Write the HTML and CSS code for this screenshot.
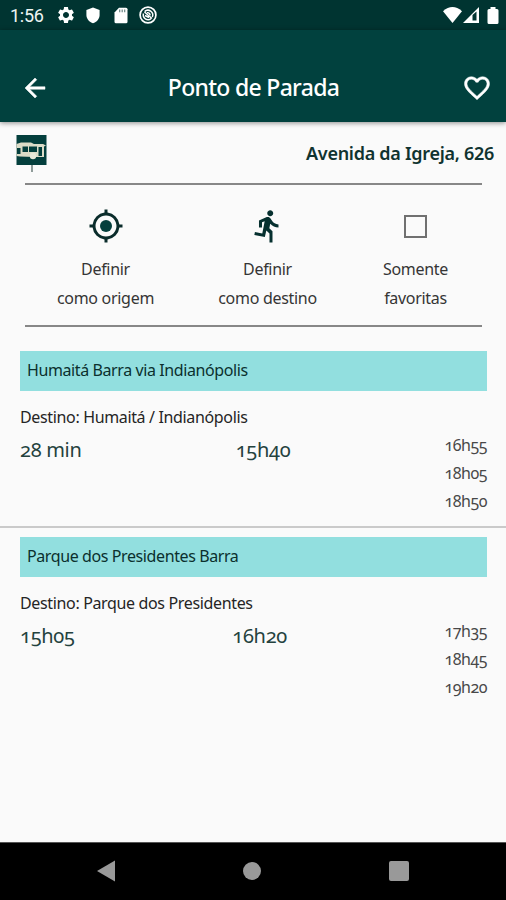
FILE: index.html
```html
<!DOCTYPE html>
<html lang="pt-BR">
<head>
<meta charset="utf-8">
<title>Ponto de Parada</title>
<link rel="stylesheet" href="styles.css">
</head>
<body>
<div class="screen">
  <div class="status">
    <span class="clock">1:56</span>
    <svg class="s-gear" width="20" height="20" viewBox="0 0 24 24"><path fill="#fff" d="M19.14 12.94c.04-.3.06-.61.06-.94 0-.32-.02-.64-.07-.94l2.03-1.58c.18-.14.23-.41.12-.61l-1.92-3.32c-.12-.22-.37-.29-.59-.22l-2.39.96c-.5-.38-1.03-.7-1.62-.94l-.36-2.54c-.04-.24-.24-.41-.48-.41h-3.84c-.24 0-.43.17-.47.41l-.36 2.54c-.59.24-1.13.57-1.62.94l-2.39-.96c-.22-.08-.47 0-.59.22L2.74 8.87c-.12.21-.08.47.12.61l2.03 1.58c-.05.3-.09.63-.09.94s.02.64.07.94l-2.03 1.58c-.18.14-.23.41-.12.61l1.92 3.32c.12.22.37.29.59.22l2.39-.96c.5.38 1.03.7 1.62.94l.36 2.54c.05.24.24.41.48.41h3.84c.24 0 .44-.17.47-.41l.36-2.54c.59-.24 1.13-.56 1.62-.94l2.39.96c.22.08.47 0 .59-.22l1.92-3.32c.12-.22.07-.47-.12-.61zM12 15.600c-1.980 0-3.600-1.620-3.600-3.600s1.620-3.600 3.600-3.600 3.600 1.620 3.600 3.600-1.620 3.600-3.600 3.600z"/></svg>
    <svg class="s-shield" width="14" height="17" viewBox="0 0 14 17"><path fill="#fff" d="M7 .5 13.600 3v5c0 4-3 7-6.600 8.300C3.400 15 .4 12 .4 8V3z"/></svg>
    <svg class="s-card" width="14" height="17" viewBox="0 0 14 17"><path fill="#fff" d="M5 .8h7q1.500 0 1.500 1.500v12.400q0 1.500-1.500 1.500H2q-1.500 0-1.500-1.500V5.500z"/><path stroke="#6b8785" stroke-width="1.200" d="M5.700 2.500v2.800M8.200 2.500v2.800M10.700 2.500v2.800"/></svg>
    <svg class="s-round" width="18" height="18" viewBox="0 0 18 18" fill="none" stroke="#fff"><circle cx="9" cy="9" r="7.900" stroke-width="1.700"/><path stroke-width="1.500" d="M5.600 5.600A4.800 4.800 0 0 1 13.300 11M12 12.700A4.800 4.800 0 0 1 4.500 7.500M5.500 6l7.500 6.500M6 9.500l4 2"/><path stroke-width="1.500" d="M8 6.800a2.300 2.300 0 0 1 3 2.600"/></svg>
    <span class="grow"></span>
    <svg class="s-wifi" width="19" height="16" viewBox="0 0 19 16"><path fill="#fff" d="M0 4.200Q9.500-4 19 4.200L9.500 16z"/></svg>
    <svg class="s-cell" width="16" height="16" viewBox="0 0 16 16"><path fill="#fff" fill-rule="evenodd" d="M0 16 16 0v16zM9.500 8V13.500H13.500V4.500z"/></svg>
    <svg class="s-bat" width="12" height="17" viewBox="0 0 12 17"><path fill="#fff" d="M3.500 0h5v2H10q1.500 0 1.500 1.500v12Q11.500 17 10 17H2Q.5 17 .5 15.500v-12Q.5 2 2 2h1.500z"/></svg>
  </div>
  <header class="bar">
    <svg width="30" height="30" viewBox="0 0 24 24"><path fill="#fff" stroke="#fff" stroke-width=".4" d="M20 11H7.830l5.590-5.590L12 4l-8 8 8 8 1.410-1.410L7.830 13H20z"/></svg>
    <h1>Ponto de Parada</h1>
    <svg width="30" height="30" viewBox="0 0 24 24"><path fill="#fff" stroke="#fff" stroke-width=".4" d="M16.500 3c-1.740 0-3.410.81-4.500 2.090C10.910 3.810 9.240 3 7.500 3 4.420 3 2 5.420 2 8.500c0 3.780 3.400 6.860 8.550 11.540L12 21.350l1.450-1.320C18.600 15.360 22 12.280 22 8.500 22 5.420 19.580 3 16.500 3zm-4.400 15.550-.1.100-.1-.1C7.140 14.240 4 11.390 4 8.500 4 6.500 5.500 5 7.500 5c1.540 0 3.040.99 3.570 2.360h1.870C13.460 5.990 14.960 5 16.500 5c2 0 3.500 1.500 3.500 3.500 0 2.890-3.140 5.740-7.900 10.050z"/></svg>
  </header>
  <main>
    <div class="stop">
      <svg width="32" height="38" viewBox="0 0 32 38"><path fill="#043f3d" d="M.5 0h30v30H.5z"/><path fill="#dcdcc8" d="M.5 9 5 7.500h10l3 1.500h9l3 1.500-2 1V22H18l-14-.5L.5 21z"/><path fill="#043f3d" d="M6.500 11.500H12V17H6.500zM13 11.500h8V17h-8zM22.500 12H26v9h-3.500zM1 13h3.500v6H1z"/><circle cx="17" cy="21" r="3.200" fill="#e8e8d8"/><path stroke="#617370" stroke-width="1.400" d="M16 30v7"/></svg>
      <span class="address">Avenida da Igreja, 626</span>
    </div>
    <div class="actions">
      <div class="action origin">
        <svg width="36" height="36" viewBox="0 0 24 24"><circle cx="12" cy="12" r="4" fill="#043f3d"/><path fill="#0a2c2b" d="M20.940 11A8.990 8.990 0 0 0 13 3.060V1h-2v2.060A8.990 8.990 0 0 0 3.060 11H1v2h2.060A8.990 8.990 0 0 0 11 20.940V23h2v-2.060A8.990 8.990 0 0 0 20.940 13H23v-2zM12 19c-3.870 0-7-3.130-7-7s3.130-7 7-7 7 3.130 7 7-3.130 7-7 7z"/></svg>
        <span>Definir</span><span>como origem</span>
      </div>
      <div class="action dest">
        <svg width="36" height="36" viewBox="0 0 24 24"><path fill="#06302f" d="M13.490 5.480c1.100 0 2-.9 2-2s-.9-2-2-2-2 .9-2 2 .9 2 2 2zm-3.600 13.900 1-4.400 2.100 2v6h2v-7.500l-2.100-2 .6-3c1.300 1.500 3.300 2.500 5.500 2.500v-2c-1.900 0-3.500-1-4.300-2.400l-1-1.600c-.4-.6-1-1-1.700-1-.3 0-.5.1-.8.1l-5.200 2.200v4.700h2v-3.400l1.800-.7-1.600 8.100-4.900-1-.4 2z"/></svg>
        <span>Definir</span><span>como destino</span>
      </div>
      <div class="action fav">
        <i class="box"></i>
        <span>Somente</span><span>favoritas</span>
      </div>
    </div>
    <section class="line first">
      <h2>Humaitá Barra via Indianópolis</h2>
      <p>Destino: Humaitá / Indianópolis</p>
      <div class="times"><b>28 min</b><b>15h40</b><ul><li>16h55</li><li>18h05</li><li>18h50</li></ul></div>
    </section>
    <section class="line">
      <h2>Parque dos Presidentes Barra</h2>
      <p>Destino: Parque dos Presidentes</p>
      <div class="times"><b>15h05</b><b>16h20</b><ul><li>17h35</li><li>18h45</li><li>19h20</li></ul></div>
    </section>
  </main>
  <nav>
    <svg width="18" height="22" viewBox="0 0 18 22"><path fill="#999" d="M18 .5v21L0 11z"/></svg>
    <i class="home"></i>
    <i class="recent"></i>
  </nav>
</div>
</body>
</html>
```
FILE: styles.css
```css
* { box-sizing: border-box; margin: 0; padding: 0; }
body { font-family: "Noto Sans", sans-serif; background: #fafafa; }
svg { display: block; flex: none; }
.screen { width: 506px; height: 900px; display: flex; flex-direction: column; overflow: hidden; }
.status { height: 30px; background: #003431; display: flex; align-items: center; padding: 0 7px 0 10px; flex: none; }
.clock { font: 400 18px/30px Roboto, sans-serif; color: #eef4f3; width: 46px; padding-top: 2px; letter-spacing: -.3px; }
.s-shield { margin-left: 10px; }
.s-card { margin-left: 14px; }
.s-round { margin-left: 11px; }
.grow { flex: 1; }
.s-cell { margin-left: 1px; }
.s-bat { margin-left: 8px; }
.bar { height: 92px; flex: none; background: #01413e; display: flex; justify-content: space-between; padding: 43px 14px 0 20px; box-shadow: 0 1px 5px rgba(0,0,0,.45); position: relative; }
h1 { font-size: 23px; line-height: 30px; font-weight: 500; color: #fff; letter-spacing: -.7px; margin-top: -1px; padding-right: 5px; white-space: nowrap; }
main { flex: 1; background: #fafafa; }
.stop { height: 61px; display: flex; justify-content: space-between; padding: 13px 12px 0 16px; }
.address { font-size: 18px; font-weight: 600; line-height: 36px; letter-spacing: -.28px; color: #103330; white-space: nowrap; }
.actions { margin: 0 24px 0 25px; height: 144px; border-top: 2px solid #878787; border-bottom: 2px solid #878787; display: flex; }
.action { display: flex; flex-direction: column; align-items: center; padding-top: 23px; font-size: 16px; line-height: 28.500px; letter-spacing: -.3px; color: #353535; white-space: nowrap; }
.action svg { margin-bottom: 11px; }
.origin { width: 161px; }
.dest { width: 163px; }
.fav { width: 133px; }
.box { width: 23px; height: 23px; border: 2px solid #707070; margin: 7px 0 17px; }
.line { padding: 9px 19px 0 20px; height: 186px; }
.first { padding-top: 24px; height: 201px; border-bottom: 2px solid #cacaca; }
h2 { height: 40px; background: #92dfdf; font-size: 16px; font-weight: 400; line-height: 38px; padding-left: 7px; letter-spacing: -.4px; color: #0b302e; white-space: nowrap; }
p { font-size: 16px; line-height: 28px; margin-top: 12px; letter-spacing: -.35px; color: #252525; white-space: nowrap; }
.times { display: flex; justify-content: space-between; font-feature-settings: "onum"; }
.times b { font-weight: 400; font-size: 20px; line-height: 38px; letter-spacing: -.3px; color: #24423e; white-space: nowrap; }
ul { list-style: none; text-align: right; font-size: 16px; line-height: 28px; letter-spacing: -.5px; color: #484848; }
nav { height: 58px; flex: none; background: #000; display: flex; justify-content: space-between; align-items: center; border-top: 1px solid #555; padding: 0 97px 2px; }
.home { width: 18px; height: 18px; border-radius: 50%; background: #999; }
.recent { width: 20px; height: 20px; border-radius: 2px; background: #999; }
```
